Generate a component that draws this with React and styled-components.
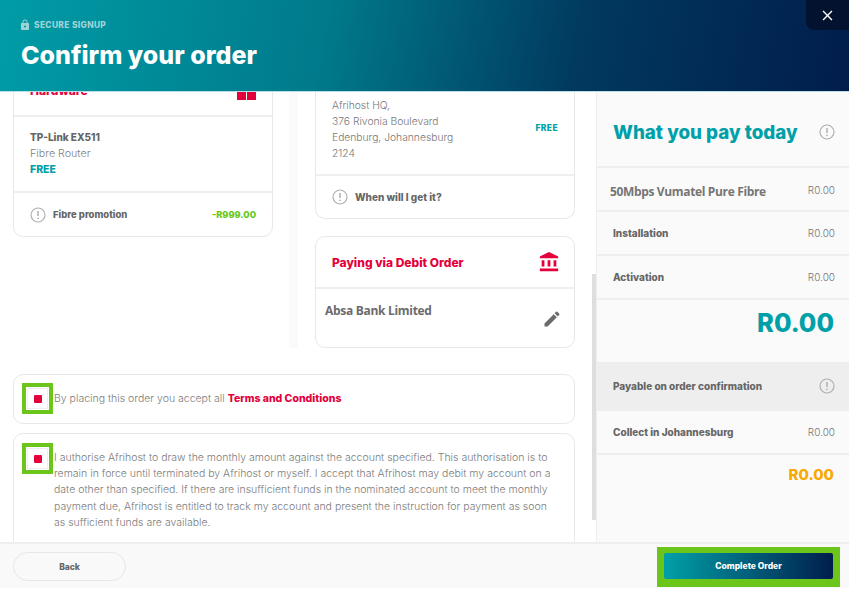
import React from "react";
import styled, { createGlobalStyle } from "styled-components";
import { MdAccountBalance, MdClose, MdEdit, MdLock } from "react-icons/md";

const Global = createGlobalStyle`
  html, body { margin: 0; padding: 0; background: #fff; }
  body { font-family: Inter, "Liberation Sans", sans-serif; color: #6e6e6e; }
  * { box-sizing: border-box; }
`;

const Page = styled.div`
  width: 849px;
  height: 594px;
  display: flex;
  flex-direction: column;
  overflow: hidden;
  background: #fff;
`;

const Header = styled.header`
  position: relative;
  height: 92px;
  flex: none;
  padding: 19px 21px 0;
  background: linear-gradient(100deg, #009ca6 0%, #007a8c 38%, #01395f 68%, #011d4c 100%);
  border-bottom: 1px solid #b8dfe3;
`;

const Secure = styled.div`
  display: flex;
  align-items: center;
  gap: 3px;
  font-size: 8.4px;
  font-weight: 800;
  letter-spacing: 0.35px;
  color: #9fd3d8;
  svg { font-size: 12px; margin-left: -2px; }
`;

const Title = styled.h1`
  margin: 9px 0 0;
  font-size: 25px;
  line-height: 30px;
  font-weight: 800;
  color: #fff;
`;

const Close = styled.div`
  position: absolute;
  top: 0;
  right: 0;
  width: 43px;
  height: 30px;
  display: flex;
  align-items: center;
  justify-content: center;
  background: #03122e;
  border-bottom-left-radius: 8px;
  color: #fff;
  font-size: 17px;
`;

const Main = styled.main`
  flex: none;
  height: 450px;
  display: grid;
  grid-template-columns: 596px 1fr;
  overflow: hidden;
`;

const Left = styled.section`
  position: relative;
  padding: 0 21px 0 13px;
  overflow: hidden;
`;

const Scrollbar = styled.div`
  position: absolute;
  top: 182px;
  right: 0;
  width: 4px;
  height: 246px;
  background: #dedede;
`;

const Columns = styled.div`
  display: flex;
  height: 256px;
  gap: 17px;
`;

const Column = styled.div`
  width: 260px;
  flex: none;
  display: flex;
  flex-direction: column;
  gap: 17px;
  margin-top: ${(p) => p.$offset || 0}px;
`;

const Track = styled.div`
  width: 9px;
  flex: none;
  margin: 0 0 0 -1px;
  background: #fafafa;
`;

const Card = styled.div`
  border: 1px solid #e8e8e8;
  border-radius: 10px;
  background: #fff;
  flex: ${(p) => (p.$grow ? 1 : "none")};
  ${(p) => p.$open && "border-top: 0; border-top-left-radius: 0; border-top-right-radius: 0;"}
`;

const CardHead = styled.div`
  display: flex;
  align-items: center;
  justify-content: space-between;
  height: 52px;
  padding: 0 16px;
  border-bottom: 2px solid #efefef;
  color: #e4003a;
  font-size: 12px;
  font-weight: 800;
`;

const GiftIcon = styled.svg`
  width: 19px;
  height: 20px;
  flex: none;
`;

const BankIcon = styled(MdAccountBalance)`
  font-size: 22px;
  margin-right: -2px;
`;

const Product = styled.div`
  height: 76px;
  padding: 14px 16px 0;
  border-bottom: 2px solid #efefef;
  display: flex;
  flex-direction: column;
  gap: 3px;
`;

const ProductName = styled.div`
  font-size: 10px;
  line-height: 13px;
  font-weight: 800;
  color: #666;
`;

const ProductType = styled.div`
  font-size: 10.7px;
  line-height: 13px;
  font-weight: 300;
  color: #808080;
`;

const Free = styled.div`
  font-size: ${(p) => p.$size || 10.5}px;
  line-height: 13px;
  font-weight: 800;
  letter-spacing: ${(p) => (p.$size ? 0.4 : 0)}px;
  color: #00a0a8;
`;

const NoteRow = styled.div`
  display: flex;
  align-items: center;
  gap: 7px;
  height: ${(p) => p.$height}px;
  padding: 0 16px;
`;

const NoteText = styled.span`
  flex: 1;
  font-size: ${(p) => p.$size}px;
  font-weight: 800;
  color: #666;
`;

const Discount = styled.span`
  font-size: 9.2px;
  font-weight: 800;
  color: #66c81a;
`;

const Address = styled.div`
  height: 84px;
  padding: 5px 16px 0;
  display: flex;
  align-items: flex-start;
  justify-content: space-between;
  border-bottom: 2px solid #efefef;
`;

const AddressLines = styled.div`
  font-size: 10.3px;
  line-height: 16px;
  font-weight: 300;
  color: #777;
`;

const FreeWrap = styled.div`
  padding-top: 25px;
`;

const BankBody = styled.div`
  display: flex;
  justify-content: space-between;
  padding: 13px 12px 0 9px;
  font-family: "Open Sans", sans-serif;
  font-size: 12px;
  letter-spacing: -0.3px;
  font-weight: 700;
  color: #6b6b6b;
  svg { font-size: 20px; margin-top: 7px; }
`;

const Agreement = styled.div`
  display: flex;
  align-items: ${(p) => (p.$top ? "flex-start" : "center")};
  width: 562px;
  height: ${(p) => p.$height}px;
  margin-top: ${(p) => p.$gap}px;
  padding: ${(p) => (p.$top ? "9px 20px 0 8px" : "0 20px 1px 8px")};
  border: 1px solid #e8e8e8;
  border-radius: 10px;
  font-size: 10.5px;
  font-weight: 300;
  line-height: 16.2px;
  color: #7b7b7b;
`;

const CheckMark = styled.div`
  width: 31px;
  height: 31px;
  flex: none;
  margin-right: 1px;
  display: flex;
  align-items: center;
  justify-content: center;
  background: #fff;
  border: 4px solid #6cc51b;
  box-shadow: inset 0 0 0 1px #fff, inset 0 0 0 2px #eeeeee;
  &::after {
    content: "";
    width: 8px;
    height: 8px;
    background: #e4003a;
    border-radius: 1px;
  }
`;

const AgreementText = styled.div`
  padding-top: ${(p) => (p.$top ? 7 : 2)}px;
`;

const TermsLink = styled.span`
  font-weight: 800;
  color: #e4003a;
`;

const Summary = styled.aside`
  background: #fafafa;
  border-left: 1px solid #eee;
  display: flex;
  flex-direction: column;
`;

const SummaryTitle = styled.div`
  display: flex;
  align-items: center;
  justify-content: space-between;
  height: 76px;
  padding: 6px 14px 0 16px;
  border-bottom: 2px solid #eee;
  font-size: 18.8px;
  font-weight: 800;
  color: #00a0a8;
`;

const SummaryRow = styled.div`
  display: flex;
  align-items: center;
  justify-content: space-between;
  height: ${(p) => p.$height || 44}px;
  padding: ${(p) => (p.$plan ? "2px" : "0")} 14px 0 16px;
  border-bottom: 2px solid #eee;
  background: ${(p) => (p.$shade ? "#eeeeee" : "transparent")};
  ${(p) => p.$shade && "border-bottom: 0; padding-bottom: 2px;"}
`;

const RowLabel = styled.span`
  font-size: 10px;
  font-weight: 800;
  color: #666;
`;

const PlanLabel = styled.span`
  margin: 2px 0 0 -3px;
  font-family: "Open Sans", sans-serif;
  font-size: 12px;
  letter-spacing: -0.35px;
  font-weight: 700;
  color: #757575;
`;

const Price = styled.span`
  font-size: 10px;
  font-weight: 300;
  color: #777;
`;

const Total = styled.div`
  height: ${(p) => p.$height}px;
  padding: ${(p) => p.$top}px 15px 0 0;
  text-align: right;
  font-size: ${(p) => p.$size}px;
  line-height: 1.2;
  font-weight: 800;
  color: ${(p) => p.$color};
`;

const Footer = styled.footer`
  flex: none;
  height: 46px;
  display: flex;
  align-items: flex-start;
  justify-content: space-between;
  padding: 8px 9px 0 13px;
  background: #f9f9f9;
  border-top: 2px solid #eee;
`;

const BackButton = styled.button`
  width: 113px;
  height: 29px;
  border: 1px solid #e6e6e6;
  border-radius: 15px;
  background: transparent;
  font-family: inherit;
  font-size: 8.5px;
  font-weight: 800;
  color: #666;
`;

const CompleteBox = styled.div`
  margin-top: -5px;
  height: 40px;
  padding: 6px 7px 7px;
  background: #6cc51b;
`;

const CompleteButton = styled.button`
  display: block;
  width: 169px;
  height: 26px;
  border: 0;
  border-radius: 2px;
  background: linear-gradient(90deg, #00a0a8, #011d4c);
  font-family: inherit;
  font-size: 8.5px;
  font-weight: 800;
  color: #fff;
`;

function InfoIcon({ size = 16 }) {
  return (
    <svg width={size} height={size} viewBox="0 0 16 16" fill="none" style={{ flex: "none" }}>
      <circle cx="8" cy="8" r="7" stroke="#b0b0b0" strokeWidth="1.2" />
      <path d="M8 4v5" stroke="#b0b0b0" strokeWidth="1.5" />
      <circle cx="8" cy="11.3" r="0.9" fill="#b0b0b0" />
    </svg>
  );
}

export default function App() {
  return (
    <Page>
      <Global />
      <Header>
        <Secure>
          <MdLock />
          SECURE SIGNUP
        </Secure>
        <Title>Confirm your order</Title>
        <Close>
          <MdClose />
        </Close>
      </Header>
      <Main>
        <Left>
          <Columns>
            <Column $offset={-28}>
              <Card>
                <CardHead>
                  Hardware
                  <GiftIcon viewBox="0 0 19 20">
                    <rect x="0" y="0" width="9" height="20" fill="#e4003a" />
                    <rect x="10" y="0" width="9" height="20" fill="#e4003a" />
                  </GiftIcon>
                </CardHead>
                <Product>
                  <ProductName>TP-Link EX511</ProductName>
                  <ProductType>Fibre Router</ProductType>
                  <Free>FREE</Free>
                </Product>
                <NoteRow $height={43}>
                  <InfoIcon />
                  <NoteText $size={9.5}>Fibre promotion</NoteText>
                  <Discount>-R999.00</Discount>
                </NoteRow>
              </Card>
            </Column>
            <Track />
            <Column>
              <Card $open>
                <Address>
                  <AddressLines>
                    Afrihost HQ,
                    <br />
                    376 Rivonia Boulevard
                    <br />
                    Edenburg, Johannesburg
                    <br />
                    2124
                  </AddressLines>
                  <FreeWrap>
                    <Free $size={8.5}>FREE</Free>
                  </FreeWrap>
                </Address>
                <NoteRow $height={42}>
                  <InfoIcon />
                  <NoteText $size={10}>When will I get it?</NoteText>
                </NoteRow>
              </Card>
              <Card $grow>
                <CardHead>
                  Paying via Debit Order
                  <BankIcon />
                </CardHead>
                <BankBody>
                  Absa Bank Limited
                  <MdEdit />
                </BankBody>
              </Card>
            </Column>
          </Columns>
          <Agreement $height={50} $gap={26}>
            <CheckMark />
            <AgreementText>
              By placing this order you accept all <TermsLink>Terms and Conditions</TermsLink>
            </AgreementText>
          </Agreement>
          <Agreement $top $height={130} $gap={9}>
            <CheckMark />
            <AgreementText $top>
              I authorise Afrihost to draw the monthly amount against the account specified. This authorisation is to
              remain in force until terminated by Afrihost or myself. I accept that Afrihost may debit my account on a
              date other than specified. If there are insufficient funds in the nominated account to meet the monthly
              payment due, Afrihost is entitled to track my account and present the instruction for payment as soon
              as sufficient funds are available.
            </AgreementText>
          </Agreement>
          <Scrollbar />
        </Left>
        <Summary>
          <SummaryTitle>
            What you pay today
            <InfoIcon />
          </SummaryTitle>
          <SummaryRow $plan>
            <PlanLabel>50Mbps Vumatel Pure Fibre</PlanLabel>
            <Price>R0.00</Price>
          </SummaryRow>
          <SummaryRow>
            <RowLabel>Installation</RowLabel>
            <Price>R0.00</Price>
          </SummaryRow>
          <SummaryRow>
            <RowLabel>Activation</RowLabel>
            <Price>R0.00</Price>
          </SummaryRow>
          <Total $height={62} $top={8} $size={25.4} $color="#00a0a8">
            R0.00
          </Total>
          <SummaryRow $shade $height={49}>
            <RowLabel>Payable on order confirmation</RowLabel>
            <InfoIcon />
          </SummaryRow>
          <SummaryRow>
            <RowLabel>Collect in Johannesburg</RowLabel>
            <Price>R0.00</Price>
          </SummaryRow>
          <Total $height={87} $top={11} $size={15} $color="#f9a800">
            R0.00
          </Total>
        </Summary>
      </Main>
      <Footer>
        <BackButton>Back</BackButton>
        <CompleteBox>
          <CompleteButton>Complete Order</CompleteButton>
        </CompleteBox>
      </Footer>
    </Page>
  );
}
